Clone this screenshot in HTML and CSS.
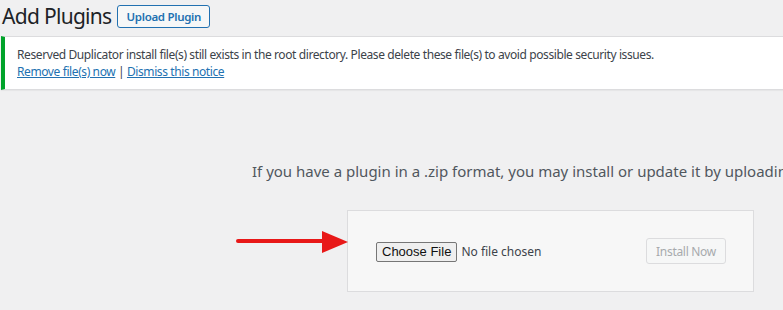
FILE: index.html
```html
<!DOCTYPE html>
<html lang="en">
<head>
    <meta charset="UTF-8">
    <meta name="viewport" content="width=device-width, initial-scale=1.0">
    <title>Add Plugins</title>
    <link rel="stylesheet" href="styles.css">
</head>
<body>
    <div class="wrap">
        <div class="page-head">
            <h1>Add Plugins</h1>
            <a href="#" class="page-title-action">Upload Plugin</a>
        </div>

        <div class="notice notice-success">
            <p>Reserved Duplicator install file(s) still exists in the root directory. Please delete these file(s) to avoid possible security issues.</p>
            <p><a href="#">Remove file(s) now</a> | <a href="#">Dismiss this notice</a></p>
        </div>

        <div class="upload-plugin">
            <p class="install-help">If you have a plugin in a .zip format, you may install or update it by uploading it here.</p>
            <form class="wp-upload-form">
                <div class="file-field">
                    <span class="choose-btn">Choose File</span>
                    <span class="file-name">No file chosen</span>
                </div>
                <button type="button" class="install-btn" disabled>Install Now</button>
            </form>
        </div>
    </div>

    <!-- annotation arrow -->
    <svg class="arrow" width="120" height="30" viewBox="0 0 120 30">
        <line x1="3" y1="12" x2="88" y2="12" stroke="#e81818" stroke-width="4" stroke-linecap="round"/>
        <polygon points="87,2 113,13 87,24" fill="#e81818"/>
    </svg>
</body>
</html>
```

FILE: styles.css
```css
body {
    margin: 0;
    background: #f0f0f1;
    color: #3c434a;
    font-family: "Noto Sans", sans-serif;
    font-size: 13px;
    width: 783px;
    height: 310px;
    overflow: hidden;
    position: relative;
}
.wrap {
    margin-left: 1px;
    width: 900px;
}
.page-head {
    display: flex;
    align-items: center;
    gap: 6px;
    padding-top: 4px;
    padding-left: 1px;
}
.page-head h1 {
    margin: 0;
    font-size: 21px;
    font-weight: 400;
    letter-spacing: -0.7px;
    line-height: 24px;
    color: #1d2327;
}
.page-title-action {
    display: inline-block;
    height: 21px;
    line-height: 21px;
    padding: 0 8px;
    border: 1px solid #2271b1;
    border-radius: 3px;
    background: #f6f7f7;
    color: #2271b1;
    font-size: 11.5px;
    font-weight: 600;
    letter-spacing: -0.3px;
    text-decoration: none;
}
.notice {
    margin-top: 8px;
    background: #fff;
    border: 1px solid #dcdcde;
    border-left: 4px solid #00a32a;
    box-shadow: 0 1px 1px rgba(0, 0, 0, .04);
    padding: 9px 12px;
}
.notice p {
    margin: 0;
    font-size: 12px;
    letter-spacing: -0.4px;
    line-height: 17px;
    white-space: nowrap;
}
.notice a {
    color: #2271b1;
}
.upload-plugin {
    padding-top: 71px;
}
.install-help {
    margin: 0 0 29px 251px;
    font-size: 15px;
    line-height: 20px;
    color: #50575e;
    white-space: nowrap;
}
.wp-upload-form {
    margin-left: 346px;
    width: 350px;
    height: 80px;
    padding: 0 27px 0 28px;
    background: #f7f7f7;
    border: 1px solid #dcdcde;
    display: flex;
    align-items: center;
    justify-content: space-between;
}
.file-field {
    display: flex;
    align-items: center;
    gap: 4px;
    margin-top: 1px;
}
.choose-btn {
    font-family: "Liberation Sans", Arial, sans-serif;
    font-size: 13px;
    color: #111;
    padding: 1px 5px;
    height: 16px;
    line-height: 16px;
    background: #efefef;
    border: 1px solid #767676;
    border-radius: 2px;
}
.file-name {
    font-size: 12px;
    color: #3c434a;
}
.install-btn {
    height: 26px;
    width: 80px;
    padding: 0;
    font-family: "Noto Sans", sans-serif;
    font-size: 12px;
    letter-spacing: -0.3px;
    color: #a7aaad;
    background: #f6f7f7;
    border: 1px solid #dcdcde;
    border-radius: 3px;
}
.arrow {
    position: absolute;
    left: 235px;
    top: 229px;
}
```
